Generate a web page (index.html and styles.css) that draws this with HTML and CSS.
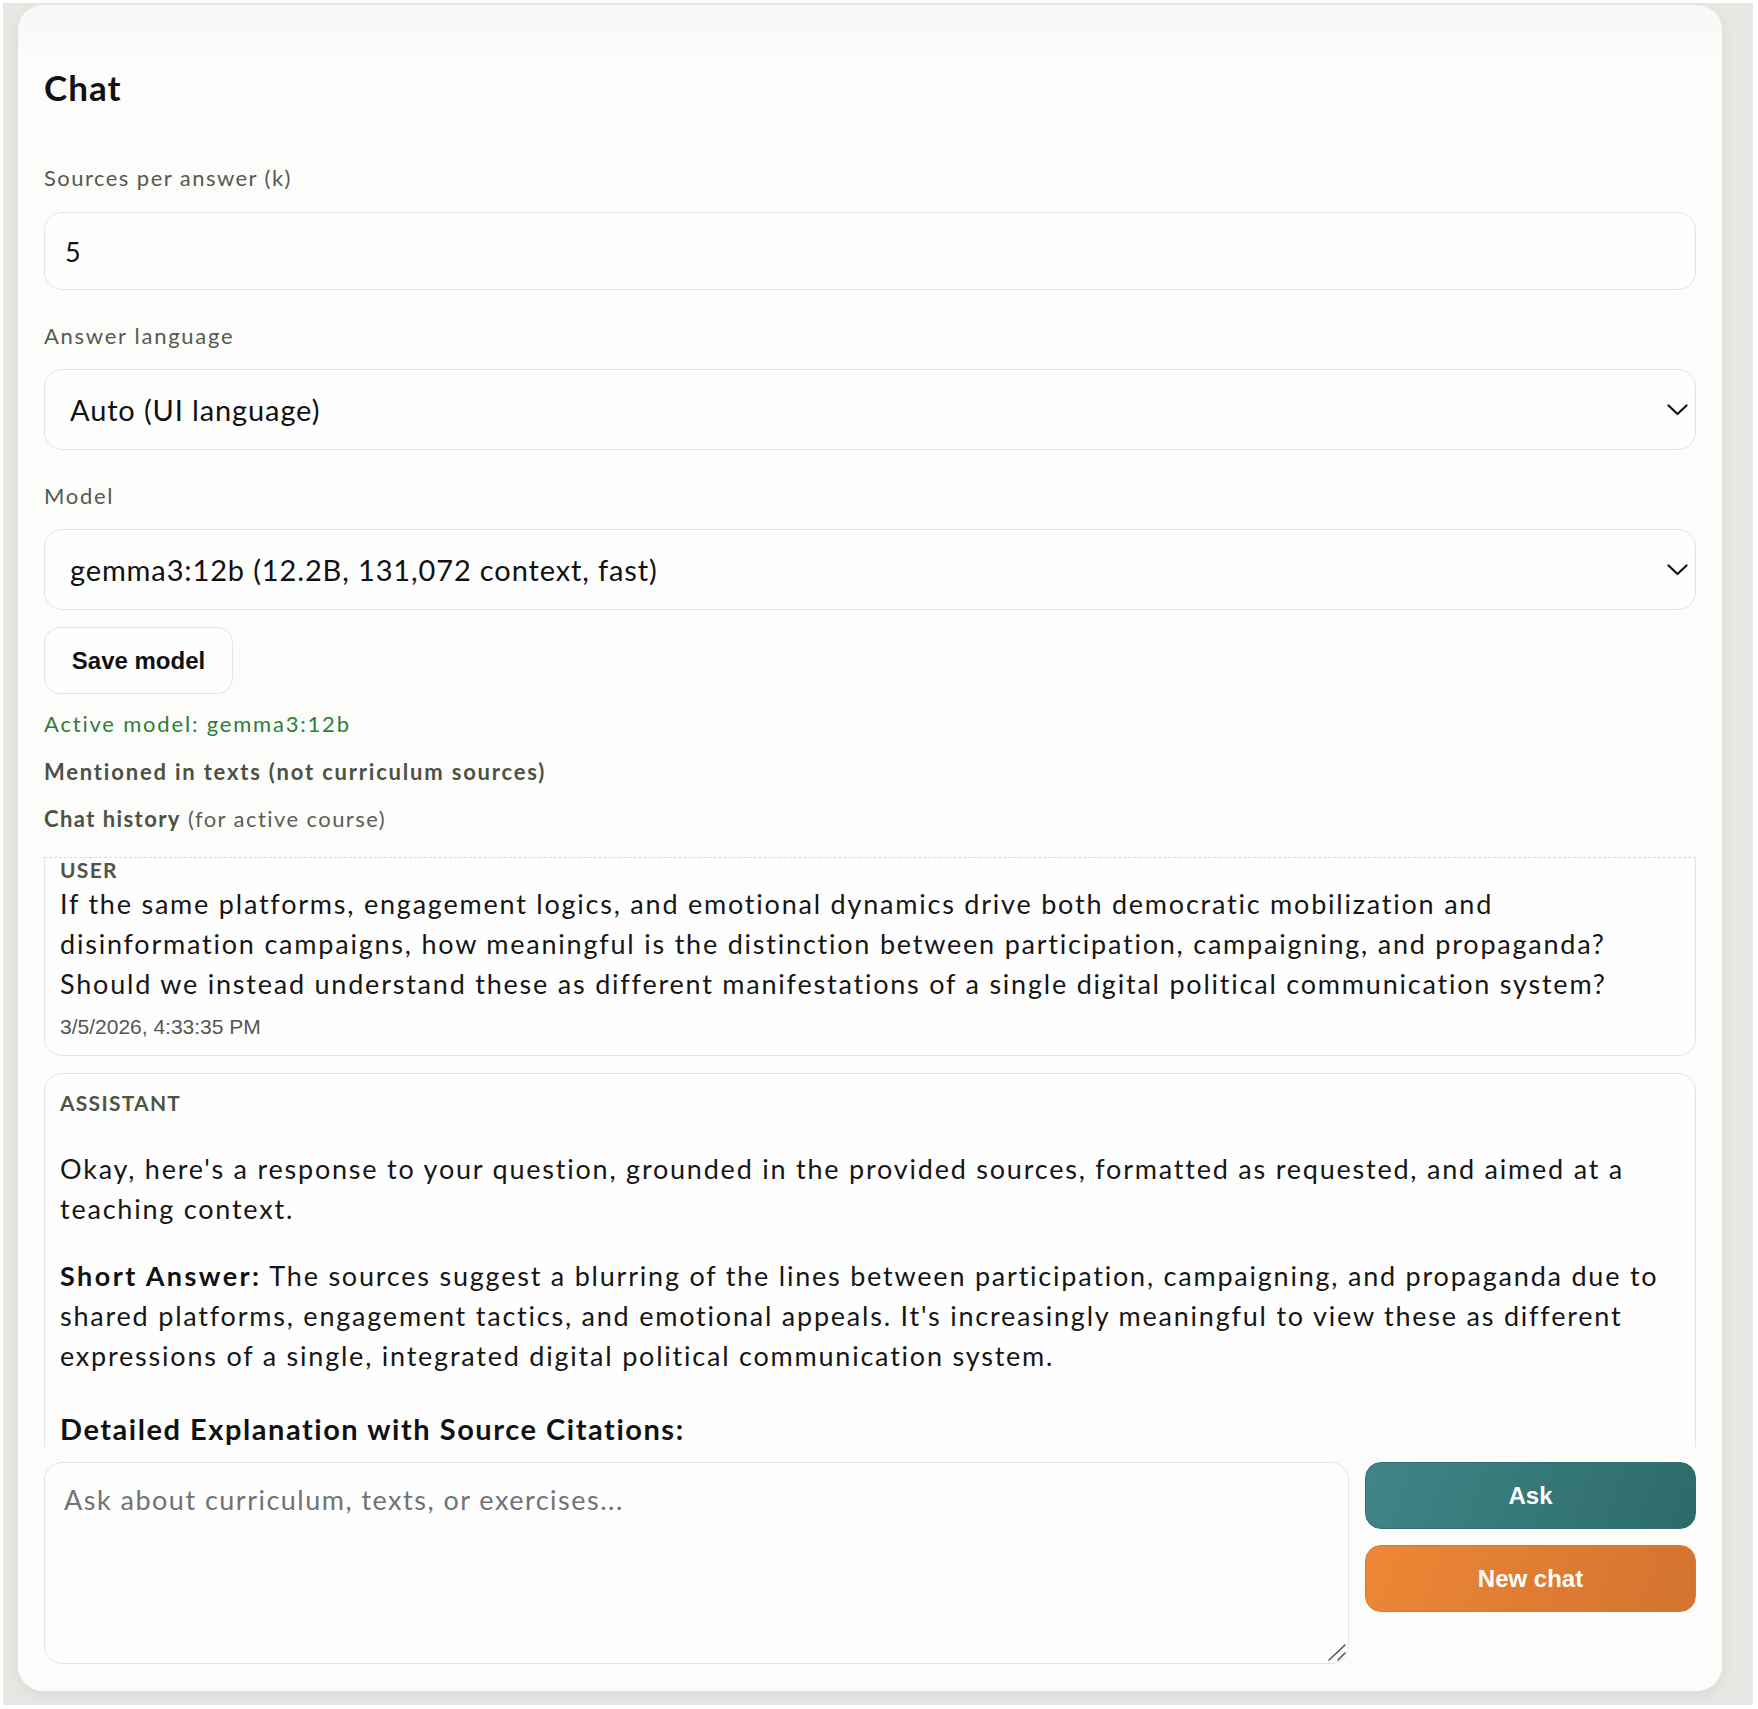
FILE: index.html
```html
<!DOCTYPE html>
<html lang="en">
<head>
  <meta charset="UTF-8">
  <title>Chat</title>
  <link rel="stylesheet" href="styles.css">
</head>
<body>
  <div class="backdrop">
    <main class="card">
      <h2 class="card-title">Chat</h2>

      <label class="field">
        <span class="field-label">Sources per answer (k)</span>
        <input class="control" type="number" value="5">
      </label>

      <label class="field">
        <span class="field-label">Answer language</span>
        <span class="select-wrap">
          <select class="control select">
            <option>Auto (UI language)</option>
          </select>
          <svg class="chevron" width="21" height="12" viewBox="0 0 21 12"><path d="M1.5 1.5 L10.5 10 L19.5 1.5" fill="none" stroke="#111" stroke-width="2.2" stroke-linecap="round" stroke-linejoin="round"/></svg>
        </span>
      </label>

      <label class="field">
        <span class="field-label">Model</span>
        <span class="select-wrap">
          <select class="control select">
            <option>gemma3:12b (12.2B, 131,072 context, fast)</option>
          </select>
          <svg class="chevron" width="21" height="12" viewBox="0 0 21 12"><path d="M1.5 1.5 L10.5 10 L19.5 1.5" fill="none" stroke="#111" stroke-width="2.2" stroke-linecap="round" stroke-linejoin="round"/></svg>
        </span>
      </label>

      <button class="btn-plain" type="button">Save model</button>

      <p class="status status-ok">Active model: gemma3:12b</p>
      <p class="subhead"><strong>Mentioned in texts (not curriculum sources)</strong></p>
      <p class="subhead"><strong>Chat history</strong> (for active course)</p>

      <div class="chat-log">
        <div class="chat-scroll">
          <article class="msg">
            <div class="msg-role">USER</div>
            <div class="msg-body">If the same platforms, engagement logics, and emotional dynamics drive both democratic mobilization and disinformation campaigns, how meaningful is the distinction between participation, campaigning, and propaganda? Should we instead understand these as different manifestations of a single digital political communication system?</div>
            <div class="msg-time">3/5/2026, 4:33:35 PM</div>
          </article>

          <article class="msg">
            <div class="msg-role">ASSISTANT</div>
            <div class="msg-body md">
              <p>Okay, here's a response to your question, grounded in the provided sources, formatted as requested, and aimed at a teaching context.</p>
              <p><strong>Short Answer:</strong> The sources suggest a blurring of the lines between participation, campaigning, and propaganda due to shared platforms, engagement tactics, and emotional appeals. It's increasingly meaningful to view these as different expressions of a single, integrated digital political communication system.</p>
              <h3>Detailed Explanation with Source Citations:</h3>
            </div>
          </article>
        </div>
      </div>

      <div class="composer">
        <div class="composer-field">
          <textarea class="composer-input" placeholder="Ask about curriculum, texts, or exercises..."></textarea>
          <svg class="grip" width="20" height="18" viewBox="0 0 20 18"><path d="M2 17 L18 2 M11 17 L18 10" stroke="#555" stroke-width="1.6" stroke-linecap="round"/></svg>
        </div>
        <div class="composer-actions">
          <button class="btn btn-ask" type="button">Ask</button>
          <button class="btn btn-new" type="button">New chat</button>
        </div>
      </div>
    </main>
  </div>
</body>
</html>
```

FILE: styles.css
```css
* {
  box-sizing: border-box;
}

body {
  margin: 0;
  background: #fff;
  font-family: "Lato", "Noto Sans", sans-serif;
  color: #161616;
  letter-spacing: 0.065em;
}

.backdrop {
  margin: 3px 5px 5px 3px;
  padding: 2px 31px 14px 15px;
  background: #e6e8e4;
}

.card {
  padding: 61px 26px 27px;
  border-radius: 25px;
  background: linear-gradient(#f8f9f7 0, #fafaf9 46px, #fcfcfb 48px, #fcfcfb 100%);
  box-shadow: 0 4px 14px rgba(60, 70, 60, 0.08);
}

.card-title {
  margin: 0;
  font-size: 35px;
  line-height: 42px;
  font-weight: 700;
  letter-spacing: 0.03em;
  color: #111;
}

/* Form fields */
.field {
  display: block;
  margin-top: 30px;
}

.card-title + .field {
  margin-top: 55px;
}

.field-label {
  display: block;
  margin-bottom: 18px;
  font-size: 22px;
  line-height: 30px;
  letter-spacing: 0.078em;
  color: #555a4f;
}

.card-title + .field .field-label {
  margin-bottom: 19px;
  letter-spacing: 0.066em;
}

.control {
  display: block;
  width: 100%;
  height: 78px;
  padding: 0 20px;
  border: 1px solid #e4e4e2;
  border-radius: 18px;
  background: #fefefe;
  font-family: inherit;
  font-size: 27px;
  letter-spacing: 0.03em;
  color: #111;
  outline: none;
}

.select-wrap {
  position: relative;
  display: block;
}

.select {
  height: 81px;
  padding: 0 60px 0 25px;
  font-size: 29px;
  -webkit-appearance: none;
  appearance: none;
}

.chevron {
  position: absolute;
  right: 8px;
  top: 50%;
  transform: translateY(-50%);
  pointer-events: none;
}

.field + .field {
  margin-top: 31px;
}

.btn-plain {
  display: block;
  margin-top: 17px;
  width: 189px;
  height: 67px;
  border: 1px solid #e3e3e1;
  border-radius: 16px;
  background: #fefefe;
  font-family: "Liberation Sans", Arial, sans-serif;
  font-size: 24px;
  font-weight: 700;
  letter-spacing: 0;
  color: #111;
}

.status,
.subhead {
  margin: 18px 0 0;
  font-size: 22px;
  line-height: 30px;
  letter-spacing: 0.082em;
  color: #5a5e55;
}

.status {
  margin-top: 15px;
}

.status-ok {
  color: #2f7d3b;
}

.subhead strong {
  font-weight: 700;
  color: #4c5145;
}

.subhead + .subhead {
  margin-top: 17px;
  letter-spacing: 0.065em;
}

/* Chat history */
.chat-log {
  margin-top: 23px;
  height: 590px;
  border-top: 1px dashed #dcdcda;
  overflow: hidden;
}

.chat-scroll {
  margin-top: -18px;
}

.msg {
  margin-bottom: 17px;
  padding: 15px 15px 16px;
  border: 1px solid #e4e4e2;
  border-radius: 18px;
  background: #fefefe;
}

.msg-role {
  font-size: 21px;
  line-height: 28px;
  font-weight: 700;
  letter-spacing: 0.06em;
  color: #4f5446;
}

.msg-body {
  font-size: 27px;
  line-height: 40px;
  letter-spacing: 0.066em;
  color: #161616;
}

.msg-time {
  margin-top: 11px;
  font-family: "Liberation Sans", Arial, sans-serif;
  font-size: 21px;
  line-height: 24px;
  letter-spacing: 0;
  color: #555;
}

.md {
  padding-top: 5px;
}

.md p {
  margin: 27px 0;
}

.md strong {
  font-weight: 700;
  letter-spacing: 0.09em;
  color: #111;
}

.md h3 {
  margin: 33px 0 0;
  font-size: 29px;
  line-height: 39px;
  font-weight: 700;
  letter-spacing: 0.053em;
  color: #111;
}

/* Composer */
.composer {
  display: flex;
  gap: 16px;
  margin-top: 15px;
}

.composer-field {
  position: relative;
  flex: 1;
}

.composer-input {
  display: block;
  width: 100%;
  height: 202px;
  padding: 17px 19px;
  border: 1px solid #e4e4e2;
  border-radius: 18px;
  background: #fefefe;
  font-family: inherit;
  font-size: 27px;
  line-height: 40px;
  letter-spacing: 0.055em;
  color: #111;
  outline: none;
  resize: none;
}

.composer-input::placeholder {
  color: #727272;
}

/* resize grip in the corner of the textarea */
.grip {
  position: absolute;
  right: 2px;
  bottom: 3px;
  pointer-events: none;
}

.composer-actions {
  display: flex;
  flex-direction: column;
  gap: 16px;
  width: 331px;
}

.btn {
  height: 67px;
  border-radius: 16px;
  font-family: "Liberation Sans", Arial, sans-serif;
  font-size: 24px;
  font-weight: 700;
  letter-spacing: 0;
  color: #fff;
  cursor: pointer;
}

.btn-ask {
  border: 1px solid #2f6f6f;
  background: linear-gradient(110deg, #3f8687 0%, #2d6a6a 100%);
}

.btn-new {
  border: 1px solid #da7a30;
  background: linear-gradient(110deg, #ee8736 0%, #d2732f 100%);
}
```
